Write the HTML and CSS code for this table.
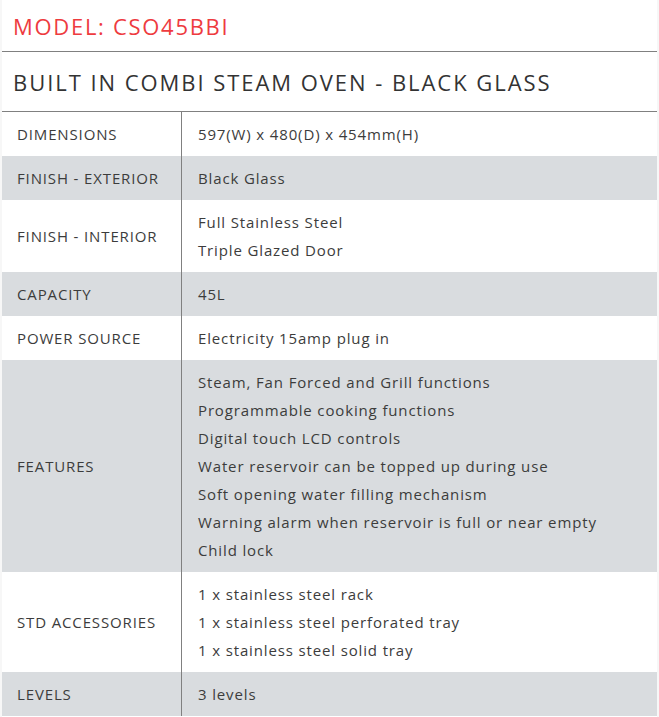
FILE: index.html
```html
<!DOCTYPE html>
<html>
<head>
<meta charset="utf-8">
<link rel="stylesheet" href="styles.css">
</head>
<body>
<div class="page">
  <div class="model">MODEL: CSO45BBI</div>
  <div class="title">BUILT IN COMBI STEAM OVEN - BLACK GLASS</div>
  <table class="specs">
    <tr><td class="label">DIMENSIONS</td><td class="value">597(W) x 480(D) x 454mm(H)</td></tr>
    <tr class="alt"><td class="label">FINISH - EXTERIOR</td><td class="value">Black Glass</td></tr>
    <tr><td class="label">FINISH - INTERIOR</td><td class="value">Full Stainless Steel<br>Triple Glazed Door</td></tr>
    <tr class="alt"><td class="label">CAPACITY</td><td class="value">45L</td></tr>
    <tr><td class="label">POWER SOURCE</td><td class="value">Electricity 15amp plug in</td></tr>
    <tr class="alt"><td class="label">FEATURES</td><td class="value">Steam, Fan Forced and Grill functions<br>Programmable cooking functions<br>Digital touch LCD controls<br>Water reservoir can be topped up during use<br>Soft opening water filling mechanism<br>Warning alarm when reservoir is full or near empty<br>Child lock</td></tr>
    <tr><td class="label">STD ACCESSORIES</td><td class="value">1 x stainless steel rack<br>1 x stainless steel perforated tray<br>1 x stainless steel solid tray</td></tr>
    <tr class="alt"><td class="label">LEVELS</td><td class="value">3 levels</td></tr>
  </table>
</div>
</body>
</html>
```
FILE: styles.css
```css
html, body {
  margin: 0;
  padding: 0;
  background: #f7f7f7;
}
body {
  font-family: "Open Sans", "Liberation Sans", sans-serif;
  color: #3a3a3a;
}
.page {
  margin: 0 2px;
  background: #ffffff;
  height: 717px;
  overflow: hidden;
}
.model {
  height: 51px;
  border-bottom: 1px solid #808080;
  box-sizing: content-box;
  padding-left: 11px;
  font-size: 22px;
  line-height: 52px;
  color: #ee3b3f;
  letter-spacing: 1.7px;
}
.title {
  height: 59px;
  border-bottom: 1px solid #808080;
  padding-left: 11px;
  font-size: 22px;
  line-height: 60px;
  color: #333333;
  letter-spacing: 1.95px;
}
.specs {
  width: 100%;
  border-collapse: collapse;
  font-size: 15px;
  line-height: 28px;
  color: #3c3c3c;
  letter-spacing: 0.86px;
}
.specs td {
  padding: 8px 15px;
  vertical-align: middle;
}
.specs .label {
  width: 149px;
  border-right: 1px solid #808080;
}
.specs .value {
  padding-left: 16px;
}
.specs tr.alt td {
  background: #d9dcdf;
}
```
